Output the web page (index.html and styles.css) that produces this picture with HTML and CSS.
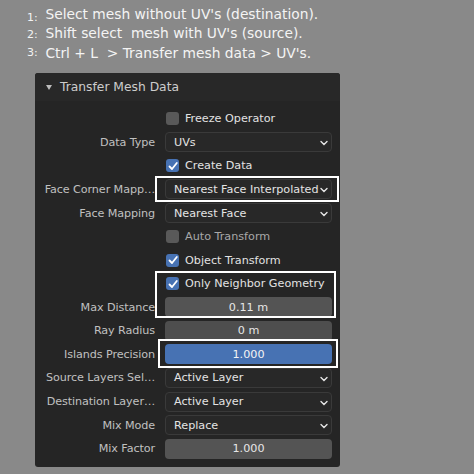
FILE: index.html
```html
<!DOCTYPE html>
<html>
<head>
<meta charset="utf-8">
<link rel="stylesheet" href="styles.css">
</head>
<body>
<div class="steps">
  <div class="step"><span class="num n1">1:</span> Select mesh without UV's (destination).</div>
  <div class="step"><span class="num n2">2:</span> Shift select&nbsp; mesh with UV's (source).</div>
  <div class="step"><span class="num n3">3:</span> Ctrl + L&nbsp; &gt; Transfer mesh data &gt; UV's.</div>
</div>
<div class="panel">
  <div class="header"><span class="tri"></span>Transfer Mesh Data</div>
  <div class="rows">
    <div class="label"></div>
    <div class="check"><span class="box"></span>Freeze Operator</div>

    <div class="label">Data Type</div>
    <div class="drop">UVs<svg class="chev" viewBox="0 0 8 6"><polyline points="1,1.5 4,4.5 7,1.5"/></svg></div>

    <div class="label"></div>
    <div class="check"><span class="box on"><svg viewBox="0 0 12 12"><polyline points="2.5,6.5 5,9 9.8,3"/></svg></span>Create Data</div>

    <div class="label">Face Corner Mapp…</div>
    <div class="drop">Nearest Face Interpolated<svg class="chev" viewBox="0 0 8 6"><polyline points="1,1.5 4,4.5 7,1.5"/></svg></div>

    <div class="label">Face Mapping</div>
    <div class="drop">Nearest Face<svg class="chev" viewBox="0 0 8 6"><polyline points="1,1.5 4,4.5 7,1.5"/></svg></div>

    <div class="label"></div>
    <div class="check dim"><span class="box"></span>Auto Transform</div>

    <div class="label"></div>
    <div class="check"><span class="box on"><svg viewBox="0 0 12 12"><polyline points="2.5,6.5 5,9 9.8,3"/></svg></span>Object Transform</div>

    <div class="label"></div>
    <div class="check"><span class="box on"><svg viewBox="0 0 12 12"><polyline points="2.5,6.5 5,9 9.8,3"/></svg></span>Only Neighbor Geometry</div>

    <div class="label">Max Distance</div>
    <div class="num-field">0.11 m</div>

    <div class="label">Ray Radius</div>
    <div class="num-field dark">0 m</div>

    <div class="label">Islands Precision</div>
    <div class="num-field blue">1.000</div>

    <div class="label">Source Layers Sel…</div>
    <div class="drop">Active Layer<svg class="chev" viewBox="0 0 8 6"><polyline points="1,1.5 4,4.5 7,1.5"/></svg></div>

    <div class="label">Destination Layer…</div>
    <div class="drop">Active Layer<svg class="chev" viewBox="0 0 8 6"><polyline points="1,1.5 4,4.5 7,1.5"/></svg></div>

    <div class="label">Mix Mode</div>
    <div class="drop">Replace<svg class="chev" viewBox="0 0 8 6"><polyline points="1,1.5 4,4.5 7,1.5"/></svg></div>

    <div class="label">Mix Factor</div>
    <div class="num-field">1.000</div>
  </div>
  <div class="mark m1"></div>
  <div class="mark m2"></div>
  <div class="mark m3"></div>
</div>
</body>
</html>
```
FILE: styles.css
```css
html, body {
  margin: 0;
  padding: 0;
  background: #898989;
  width: 474px;
  height: 474px;
  overflow: hidden;
  font-family: "DejaVu Sans", "Liberation Sans", sans-serif;
}
.steps {
  padding: 5px 0 0 27px;
  height: 68px;
  color: #f4f4f4;
  font-size: 13.8px;
}
.step {
  height: 19px;
  line-height: 19px;
  white-space: nowrap;
}
.num {
  font-size: 11px;
  display: inline-block;
  width: 14px;
}
.n1 { vertical-align: -2px; }
.n2 { vertical-align: 0; }
.n3 { vertical-align: 2px; }

.panel {
  position: relative;
  margin-left: 35px;
  width: 305px;
  height: 394px;
  background: #252525;
  border-radius: 3px;
  box-sizing: border-box;
}
.header {
  height: 28px;
  display: flex;
  align-items: center;
  color: #cdcdcd;
  font-size: 12.3px;
  padding-left: 11px;
  background: #282828;
  border-radius: 3px 3px 0 0;
}
.tri {
  width: 0;
  height: 0;
  border-left: 3px solid transparent;
  border-right: 3px solid transparent;
  border-top: 5px solid #bdbdbd;
  margin-right: 8px;
  margin-top: 1px;
}
.rows {
  display: grid;
  grid-template-columns: 120px 167px;
  column-gap: 10px;
  grid-auto-rows: 23.57px;
  padding-top: 6px;
  font-size: 11.2px;
}
.label {
  color: #c0c0c0;
  text-align: right;
  white-space: nowrap;
  align-self: center;
  letter-spacing: -0.1px;
}
.check {
  display: flex;
  align-items: center;
  color: #e2e2e2;
  padding-left: 1px;
}
.check.dim { color: #a8a8a8; }
.box {
  width: 13px;
  height: 13px;
  border-radius: 3px;
  background: #595959;
  margin-right: 6px;
  display: flex;
  align-items: center;
  justify-content: center;
  flex: none;
}
.box.on { background: #4772b3; }
.box svg {
  width: 12px;
  height: 12px;
  fill: none;
  stroke: #ffffff;
  stroke-width: 1.8;
  stroke-linecap: round;
  stroke-linejoin: round;
}
.drop {
  align-self: center;
  height: 20px;
  box-sizing: border-box;
  border: 1px solid #3a3a3a;
  background: #282828;
  border-radius: 4px;
  display: flex;
  align-items: center;
  padding-left: 8px;
  color: #e4e4e4;
  white-space: nowrap;
  position: relative;
}
.chev {
  position: absolute;
  right: 3px;
  top: 7px;
  width: 8px;
  height: 6px;
  fill: none;
  stroke: #e6e6e6;
  stroke-width: 1.4;
  stroke-linecap: round;
}
.num-field {
  align-self: center;
  height: 20px;
  border-radius: 4px;
  background: #545454;
  color: #e6e6e6;
  display: flex;
  align-items: center;
  justify-content: center;
}
.num-field.dark { background: #4e4e4e; }
.num-field.blue { background: #4772b3; color: #f4f4f4; }

.mark {
  position: absolute;
  border: 2px solid #ffffff;
  box-sizing: border-box;
  pointer-events: none;
}
.m1 { left: 120px; top: 103px; width: 184px; height: 26px; }
.m2 { left: 120px; top: 198px; width: 181px; height: 47px; }
.m3 { left: 123px; top: 266px; width: 180px; height: 29px; }
```
